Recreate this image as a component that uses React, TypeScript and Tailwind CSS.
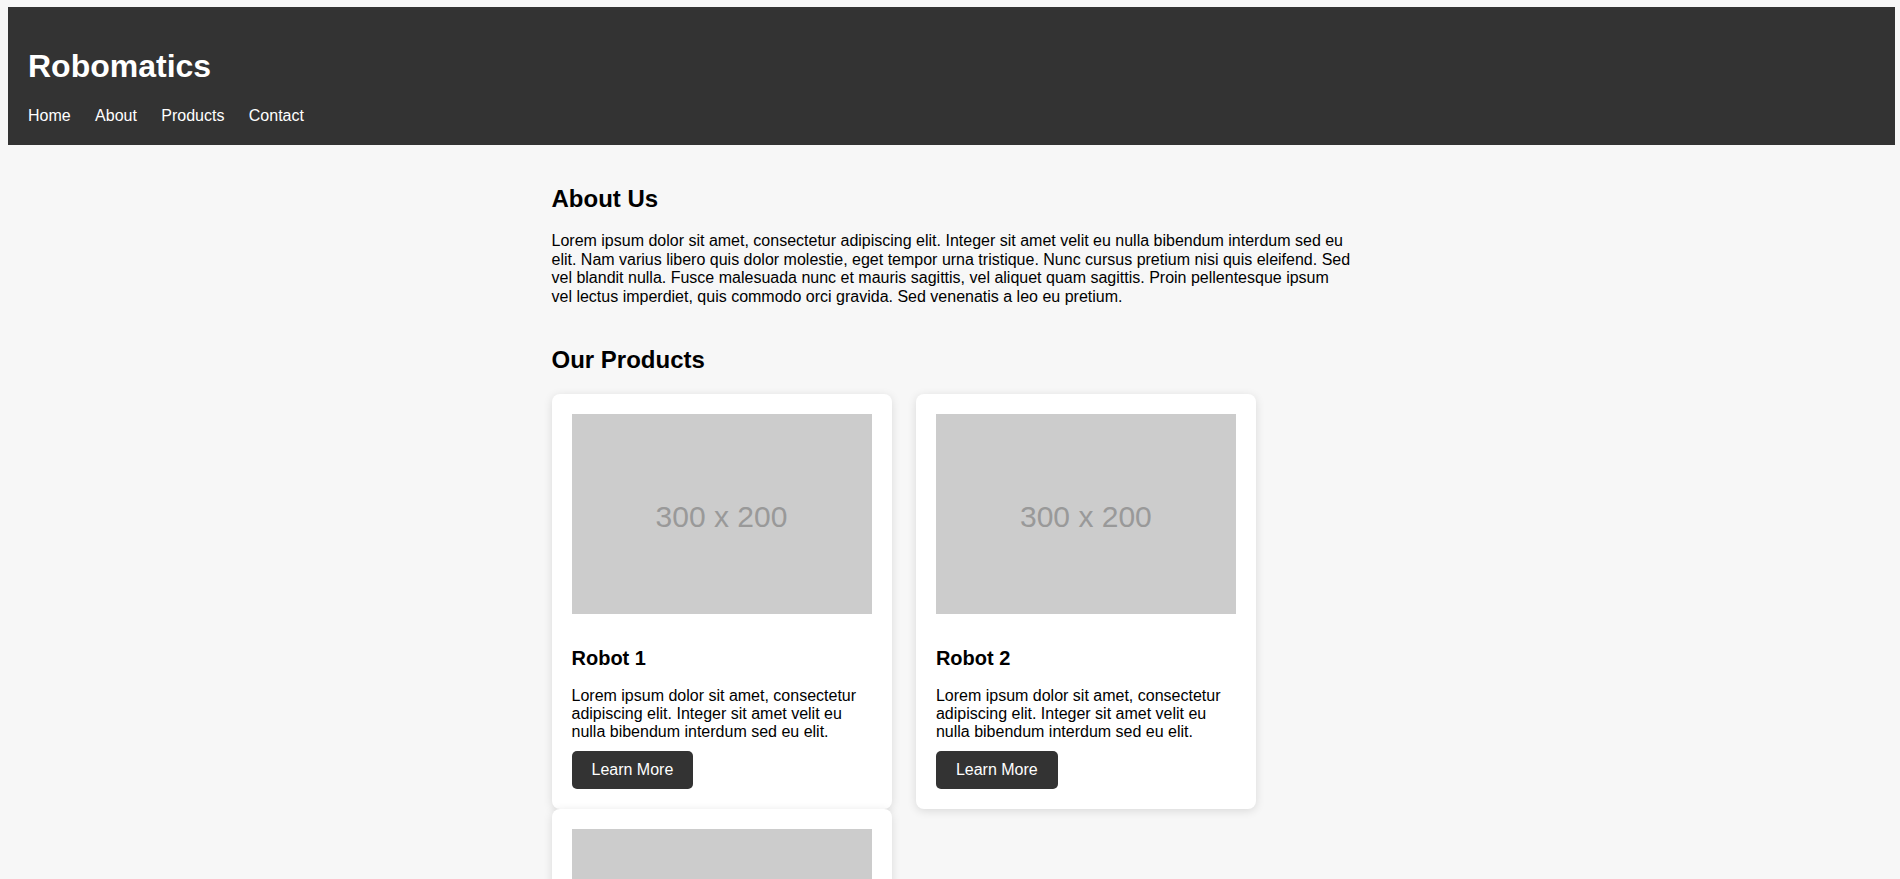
import React from "react";

const products = [
  { name: "Robot 1" },
  { name: "Robot 2" },
  { name: "Robot 3" },
];

const ProductCard = ({ name }: { name: string }) => {
  return (
    <div className="w-[340px] p-5 bg-white rounded-lg shadow-[0_2px_10px_rgba(0,0,0,0.12)]">
      <div className="w-[300px] h-[200px] pt-[6px] bg-[#cccccc] flex items-center justify-center text-[30px] text-[#999999]">
        300 x 200
      </div>
      <h3 className="mt-[33px] mb-[17px] text-[20px] leading-[23px] font-bold">{name}</h3>
      <p className="mb-[9px] text-base leading-[18.4px]">
        Lorem ipsum dolor sit amet, consectetur adipiscing elit. Integer sit amet velit eu nulla bibendum interdum sed eu elit.
      </p>
      <a href="#" className="inline-block px-5 py-2.5 bg-[#333333] text-white rounded-[5px] text-base leading-[18.4px]">
        Learn More
      </a>
    </div>
  );
};

const App = () => {
  return (
    <div className="min-h-screen bg-[#f7f7f7] pl-2 pr-[5px] pt-[7px] text-black font-['Liberation_Sans',Arial,sans-serif]">
      <header className="bg-[#333333] p-5 text-white">
        <h1 className="my-[21.44px] text-[32px] leading-[36.8px] font-bold">Robomatics</h1>
        <nav className="flex gap-[24.4px] text-base leading-[18.4px]">
          <a href="#" className="text-white">Home</a>
          <a href="#" className="text-white">About</a>
          <a href="#" className="text-white">Products</a>
          <a href="#" className="text-white">Contact</a>
        </nav>
      </header>
      <main className="max-w-[840px] mx-auto px-5 pt-5">
        <section className="mb-10">
          <h2 className="mt-[19.92px] mb-[19.92px] text-2xl leading-[27.6px] font-bold">About Us</h2>
          <p className="text-base leading-[18.4px]">
            Lorem ipsum dolor sit amet, consectetur adipiscing elit. Integer sit amet velit eu nulla bibendum interdum sed eu elit. Nam varius libero quis dolor molestie, eget tempor urna tristique. Nunc cursus pretium nisi quis eleifend. Sed vel blandit nulla. Fusce malesuada nunc et mauris sagittis, vel aliquet quam sagittis. Proin pellentesque ipsum vel lectus imperdiet, quis commodo orci gravida. Sed venenatis a leo eu pretium.
          </p>
        </section>
        <section>
          <h2 className="mt-0 mb-[19.92px] text-2xl leading-[27.6px] font-bold">Our Products</h2>
          <div className="flex flex-wrap gap-x-[24.4px]">
            {products.map((p) => (
              <ProductCard key={p.name} name={p.name} />
            ))}
          </div>
        </section>
      </main>
    </div>
  );
};

export default App;
